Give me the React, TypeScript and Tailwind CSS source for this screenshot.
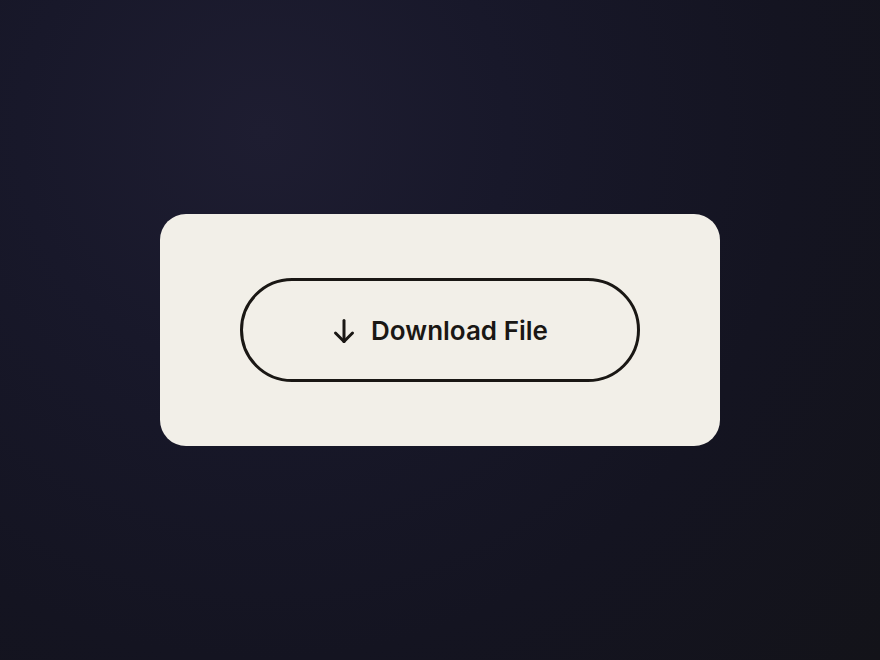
export default function App() {
  return (
    <div className="flex h-[660px] w-[880px] items-center justify-center bg-[radial-gradient(circle_at_30%_20%,#1e1d31_0%,#18182a_30%,#141421_65%,#131319_100%)] font-['Inter',sans-serif]">
      <div className="rounded-[26px] bg-[#f2efe8] px-20 py-16">
        <button
          type="button"
          className="flex h-[104px] w-[400px] items-center justify-center gap-[15px] rounded-full border-[3px] border-[#1a1714] text-[#1a1714]"
        >
          <svg width="24" height="28" viewBox="0 0 24 28" fill="none" stroke="currentColor" strokeWidth="3" strokeLinecap="round" strokeLinejoin="round" className="mt-[1px]">
            <path d="M12 3.5V24.5" />
            <path d="M3.5 16L12 24.5L20.5 16" />
          </svg>
          <span className="mt-[2px] text-[26px] font-semibold leading-none">Download File</span>
        </button>
      </div>
    </div>
  );
}
